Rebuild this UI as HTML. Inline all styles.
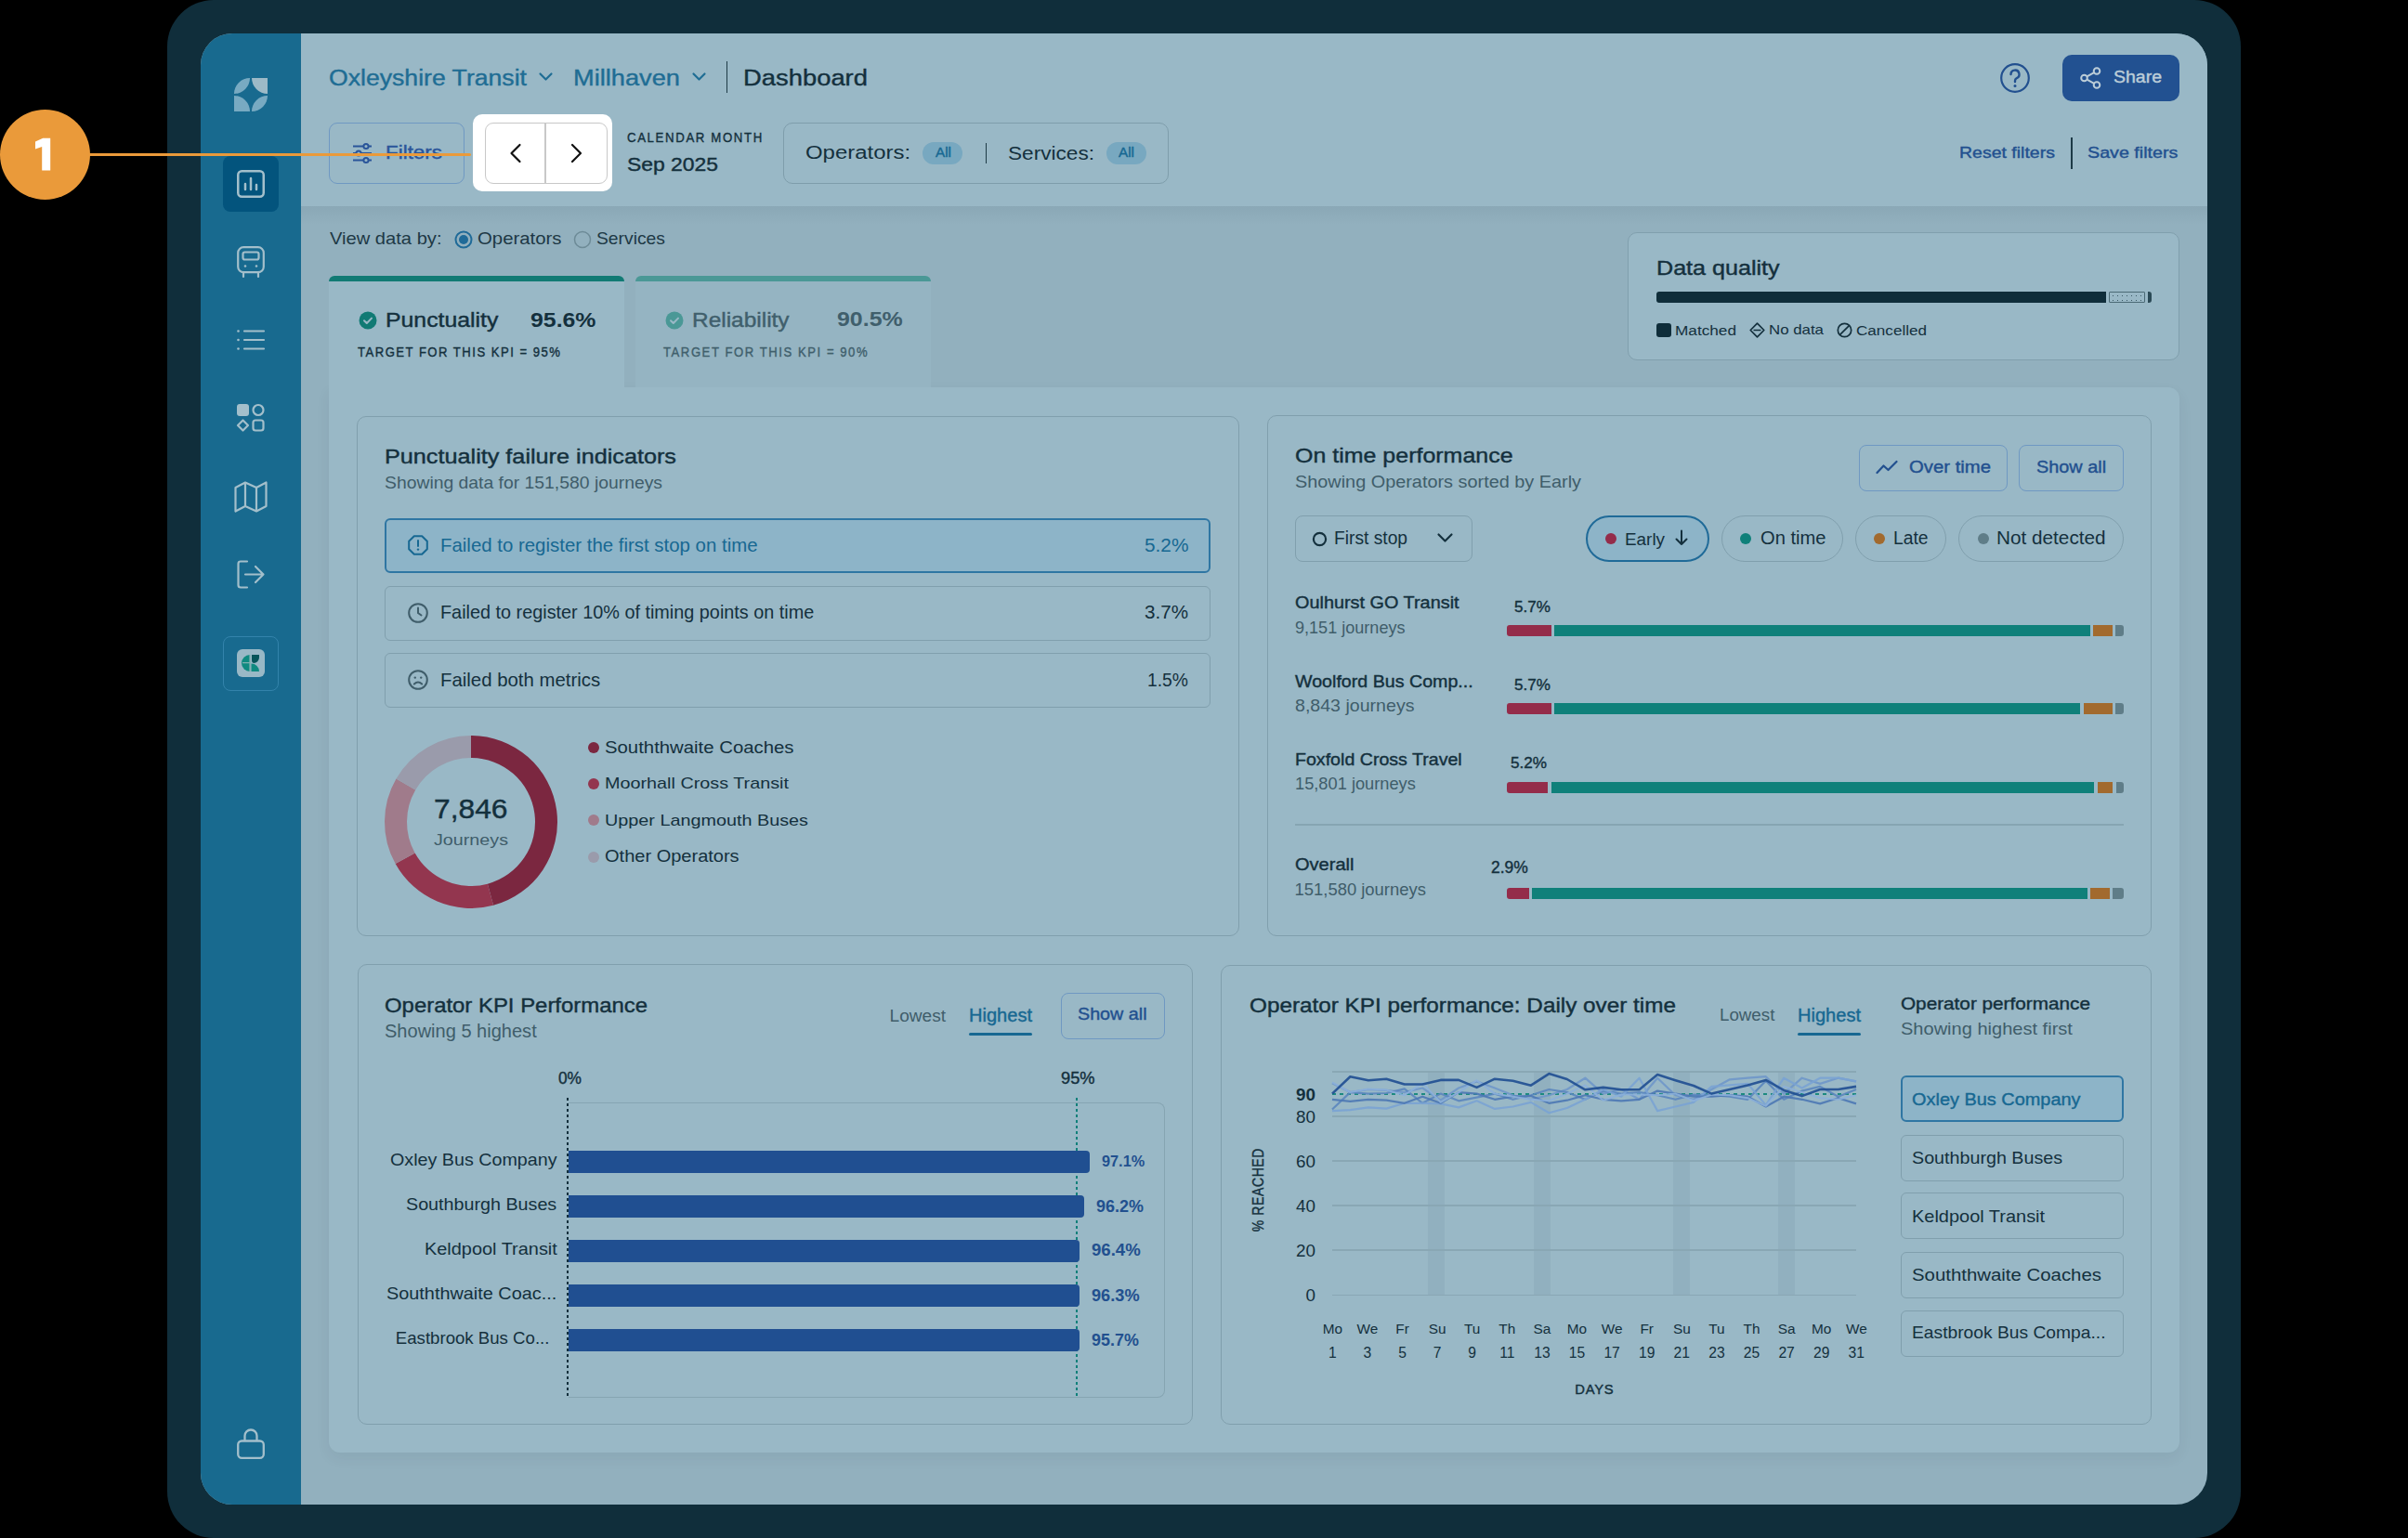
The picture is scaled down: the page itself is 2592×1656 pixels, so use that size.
<!DOCTYPE html><html><head><meta charset="utf-8"><style>
html,body{margin:0;padding:0;background:#000;}
body{width:2592px;height:1656px;position:relative;overflow:hidden;font-family:"Liberation Sans",sans-serif;}
.t{position:absolute;white-space:nowrap;line-height:1;}
</style></head><body>
<div style="position:absolute;left:180px;top:0px;width:2232px;height:1656px;background:#102e3b;border-radius:50px;"></div>
<div style="position:absolute;left:216px;top:36px;width:2160px;height:1584px;border-radius:34px;overflow:hidden;background:#92b0be">
<div style="position:absolute;left:-216px;top:-36px;width:2592px;height:1656px">
<div style="position:absolute;left:216px;top:0px;width:108px;height:1656px;background:#186a8f;border-radius:0px;"></div>
<div style="position:absolute;left:324px;top:0px;width:2100px;height:222px;background:#99b8c6;border-radius:0px;"></div>
<div style="position:absolute;left:324px;top:222px;width:2100px;height:20px;background:linear-gradient(rgba(0,30,45,0.055),rgba(0,30,45,0));border-radius:0px;"></div>
<svg style="position:absolute;left:252px;top:84px;overflow:visible;" width="36" height="36" viewBox="0 0 36 36"><path d="M0,17 A17,17 0 0 1 17,0 A17,17 0 0 1 0,17 Z" fill="#78aac2"/><path d="M19,0 L36,0 L36,17 A17,17 0 0 1 19,0 Z" fill="#9dbac7"/><path d="M0,19 A17,17 0 0 1 17,36 L0,36 Z" fill="#78aac2"/><path d="M19,36 A17,17 0 0 1 36,19 A17,17 0 0 1 19,36 Z" fill="#78aac2"/></svg>
<div style="position:absolute;left:240px;top:168px;width:60px;height:60px;background:#03547d;border-radius:8px;"></div>
<svg style="position:absolute;left:255px;top:183px;overflow:visible;" width="30" height="30" viewBox="0 0 30 30"><rect x="1.25" y="1.25" width="27.5" height="27.5" rx="4" fill="none" stroke="#a3bfcb" stroke-width="2.5"/><path d="M9,21 V15 M15,21 V9 M21,21 V16" stroke="#a3bfcb" stroke-width="2.5" stroke-linecap="round"/></svg>
<svg style="position:absolute;left:255px;top:265px;overflow:visible;" width="30" height="34" viewBox="0 0 30 34"><rect x="1.2" y="1.2" width="27.6" height="27" rx="6" fill="none" stroke="#a3bfcb" stroke-width="2.2"/><rect x="6.5" y="6.5" width="17" height="8" rx="2" fill="none" stroke="#a3bfcb" stroke-width="2.2"/><circle cx="9" cy="21.5" r="1.3" fill="#a3bfcb"/><circle cx="21" cy="21.5" r="1.3" fill="#a3bfcb"/><path d="M7,28 V33 M23,28 V33" stroke="#a3bfcb" stroke-width="2.2" stroke-linecap="round"/></svg>
<svg style="position:absolute;left:255px;top:355px;overflow:visible;" width="30" height="22" viewBox="0 0 30 22"><circle cx="1.5" cy="1.5" r="1.3" fill="#a3bfcb"/><circle cx="1.5" cy="11" r="1.3" fill="#a3bfcb"/><circle cx="1.5" cy="20.5" r="1.3" fill="#a3bfcb"/><path d="M8,1.5 H29 M8,11 H29 M8,20.5 H29" stroke="#a3bfcb" stroke-width="2.2" stroke-linecap="round"/></svg>
<svg style="position:absolute;left:255px;top:435px;overflow:visible;" width="30" height="30" viewBox="0 0 30 30"><rect x="0" y="0" width="13" height="13" rx="3" fill="#a3bfcb"/><circle cx="23" cy="6.5" r="5.5" fill="none" stroke="#a3bfcb" stroke-width="2.2"/><path d="M6.5,17.5 L12,23 L6.5,28.5 L1,23 Z" fill="none" stroke="#a3bfcb" stroke-width="2.2" stroke-linejoin="round"/><rect x="17.5" y="17.5" width="11" height="11" rx="2.5" fill="none" stroke="#a3bfcb" stroke-width="2.2"/></svg>
<svg style="position:absolute;left:252px;top:518px;overflow:visible;" width="36" height="34" viewBox="0 0 36 34"><path d="M1.5,7 L12,1.5 L24,7 L34.5,1.5 V27 L24,32.5 L12,27 L1.5,32.5 Z M12,1.5 V27 M24,7 V32.5" fill="none" stroke="#a3bfcb" stroke-width="2.2" stroke-linejoin="round"/></svg>
<svg style="position:absolute;left:255px;top:603px;overflow:visible;" width="30" height="31" viewBox="0 0 30 31"><path d="M11,1.5 H4 Q1.5,1.5 1.5,4 V27 Q1.5,29.5 4,29.5 H11" fill="none" stroke="#a3bfcb" stroke-width="2.2" stroke-linecap="round"/><path d="M9,15.5 H28.5 M20,7 L28.5,15.5 L20,24" fill="none" stroke="#a3bfcb" stroke-width="2.2" stroke-linecap="round" stroke-linejoin="round"/></svg>
<div style="position:absolute;left:240px;top:685px;width:60px;height:59px;background:none;border-radius:8px;border:1.5px solid #3383ab;box-sizing:border-box;"></div>
<div style="position:absolute;left:255px;top:699px;width:30px;height:30px;background:#99b8c6;border-radius:6px;"></div>
<svg style="position:absolute;left:261px;top:705px;overflow:visible;" width="18" height="18" viewBox="0 0 18 18"><path d="M8,0 A8,8 0 0 0 8,18 Z" fill="#0f8a80"/><path d="M9.5,9.5 L9.5,18 L18,18 A8.5,8.5 0 0 0 9.5,9.5 Z" fill="#0f8a80"/><path d="M10,0 H18 V3 A6,6 0 0 1 12,9 A3,3 0 0 1 10,6 Z" fill="#07555a"/><path d="M0,8.7 H8 M8,0 V18" stroke="#7fb0b0" stroke-width="1.3"/></svg>
<svg style="position:absolute;left:255px;top:1537px;overflow:visible;" width="30" height="34" viewBox="0 0 30 34"><path d="M8.5,15 V9 A6.5,6.5 0 0 1 21.5,9 V15" fill="none" stroke="#a3bfcb" stroke-width="2.3"/><rect x="1.2" y="14.5" width="27.6" height="18.3" rx="4" fill="none" stroke="#a3bfcb" stroke-width="2.3"/></svg>
<div class="t" id="t1" style="left:354.0px;top:72.0px;font-size:24.69px;color:#1f6d94;letter-spacing:0.000px;-webkit-text-stroke:0.4px currentColor;transform:scaleX(1.078);transform-origin:0 50%;">Oxleyshire Transit</div>
<svg style="position:absolute;left:580px;top:78px;overflow:visible;" width="15" height="10" viewBox="0 0 15 10"><path d="M1.5,1.5 L7.5,7.5 L13.5,1.5" fill="none" stroke="#1f6d94" stroke-width="2.2" stroke-linecap="round" stroke-linejoin="round"/></svg>
<div class="t" id="t2" style="left:617.0px;top:72.0px;font-size:24.81px;color:#1f6d94;letter-spacing:0.000px;-webkit-text-stroke:0.4px currentColor;transform:scaleX(1.098);transform-origin:0 50%;">Millhaven</div>
<svg style="position:absolute;left:745px;top:78px;overflow:visible;" width="15" height="10" viewBox="0 0 15 10"><path d="M1.5,1.5 L7.5,7.5 L13.5,1.5" fill="none" stroke="#1f6d94" stroke-width="2.2" stroke-linecap="round" stroke-linejoin="round"/></svg>
<div style="position:absolute;left:781.5px;top:66px;width:1.7px;height:34px;background:#1d3a46;border-radius:0px;"></div>
<div class="t" id="t3" style="left:800.0px;top:72.0px;font-size:24.84px;color:#14303d;letter-spacing:0.000px;-webkit-text-stroke:0.4px currentColor;transform:scaleX(1.103);transform-origin:0 50%;">Dashboard</div>
<div style="position:absolute;left:354px;top:132px;width:146px;height:66px;background:none;border-radius:9px;border:1.6px solid #6f98c2;box-sizing:border-box;"></div>
<svg style="position:absolute;left:379px;top:154px;overflow:visible;" width="22" height="22" viewBox="0 0 22 22"><path d="M1,3.5 H21 M1,11 H21 M1,18.5 H21" stroke="#2a559a" stroke-width="2"/><circle cx="15" cy="3.5" r="2.6" fill="#99b8c6" stroke="#2a559a" stroke-width="2"/><circle cx="7" cy="11" r="2.6" fill="#99b8c6" stroke="#2a559a" stroke-width="2"/><circle cx="15" cy="18.5" r="2.6" fill="#99b8c6" stroke="#2a559a" stroke-width="2"/></svg>
<div class="t" id="t4" style="left:415.0px;top:154.0px;font-size:20.79px;color:#2a559a;letter-spacing:0.000px;-webkit-text-stroke:0.4px currentColor;transform:scaleX(1.078);transform-origin:0 50%;">Filters</div>
<div class="t" id="t5" style="left:675.4px;top:140.1px;font-size:15.36px;color:#14303d;letter-spacing:1.901px;-webkit-text-stroke:0.4px currentColor;transform:scaleX(0.860);transform-origin:0 50%;">CALENDAR MONTH</div>
<div class="t" id="t6" style="left:675.0px;top:166.5px;font-size:20.36px;color:#14303d;letter-spacing:0.000px;-webkit-text-stroke:0.4px currentColor;transform:scaleX(1.124);transform-origin:0 50%;">Sep 2025</div>
<div style="position:absolute;left:843px;top:132px;width:415px;height:66px;background:none;border-radius:10px;border:1.5px solid #7e9dab;box-sizing:border-box;"></div>
<div class="t" id="t7" style="left:867.0px;top:154.4px;font-size:20.75px;color:#14303d;letter-spacing:0.000px;transform:scaleX(1.153);transform-origin:0 50%;">Operators:</div>
<div style="position:absolute;left:993px;top:153px;width:43px;height:24px;background:#78a8c0;border-radius:12px;"></div>
<div class="t" id="t8" style="left:1006.5px;top:157.3px;font-size:14.69px;color:#176892;letter-spacing:0.000px;-webkit-text-stroke:0.4px currentColor;transform:scaleX(1.042);transform-origin:0 50%;">All</div>
<div style="position:absolute;left:1060.5px;top:154px;width:1.7px;height:22px;background:#1d3a46;border-radius:0px;"></div>
<div class="t" id="t9" style="left:1085.0px;top:154.5px;font-size:20.52px;color:#14303d;letter-spacing:0.000px;transform:scaleX(1.103);transform-origin:0 50%;">Services:</div>
<div style="position:absolute;left:1191px;top:153px;width:43px;height:24px;background:#78a8c0;border-radius:12px;"></div>
<div class="t" id="t10" style="left:1204.3px;top:157.3px;font-size:14.69px;color:#176892;letter-spacing:0.000px;-webkit-text-stroke:0.4px currentColor;transform:scaleX(1.042);transform-origin:0 50%;">All</div>
<svg style="position:absolute;left:2153px;top:68px;overflow:visible;" width="32" height="32" viewBox="0 0 32 32"><circle cx="16" cy="16" r="14.8" fill="none" stroke="#22508f" stroke-width="2.2"/><path d="M11.5,12 A4.5,4.5 0 1 1 17.5,16.3 Q16,17 16,19 V20" fill="none" stroke="#22508f" stroke-width="2.4" stroke-linecap="round"/><circle cx="16" cy="24.6" r="1.5" fill="#22508f"/></svg>
<div style="position:absolute;left:2220px;top:59px;width:126px;height:50px;background:#225191;border-radius:10px;"></div>
<svg style="position:absolute;left:2239px;top:72px;overflow:visible;" width="23" height="24" viewBox="0 0 23 24"><g fill="none" stroke="#bccdd8" stroke-width="2"><circle cx="18" cy="4.5" r="3.3"/><circle cx="4.5" cy="12" r="3.3"/><circle cx="18" cy="19.5" r="3.3"/><path d="M7.4,10.4 L15.1,6.1 M7.4,13.6 L15.1,17.9"/></g></svg>
<div class="t" id="t11" style="left:2275.0px;top:74.8px;font-size:17.65px;color:#bccdd8;letter-spacing:0.000px;-webkit-text-stroke:0.4px currentColor;transform:scaleX(1.105);transform-origin:0 50%;">Share</div>
<div class="t" id="t12" style="left:2108.6px;top:155.8px;font-size:17.13px;color:#22508f;letter-spacing:0.000px;-webkit-text-stroke:0.4px currentColor;transform:scaleX(1.139);transform-origin:0 50%;">Reset filters</div>
<div style="position:absolute;left:2229.2px;top:148px;width:1.7px;height:34px;background:#1d3a46;border-radius:0px;"></div>
<div class="t" id="t13" style="left:2247.0px;top:155.8px;font-size:17.16px;color:#22508f;letter-spacing:0.000px;-webkit-text-stroke:0.4px currentColor;transform:scaleX(1.148);transform-origin:0 50%;">Save filters</div>
<div class="t" id="t14" style="left:354.5px;top:248.3px;font-size:18.81px;color:#1d3845;letter-spacing:0.000px;transform:scaleX(1.071);transform-origin:0 50%;">View data by:</div>
<svg style="position:absolute;left:489px;top:248px;overflow:visible;" width="20" height="20" viewBox="0 0 20 20"><circle cx="10" cy="10" r="8.5" fill="none" stroke="#1f6a98" stroke-width="2"/><circle cx="10" cy="10" r="5" fill="#1f6a98"/></svg>
<div class="t" id="t15" style="left:514.0px;top:248.2px;font-size:18.85px;color:#1d3845;letter-spacing:0.000px;transform:scaleX(1.080);transform-origin:0 50%;">Operators</div>
<svg style="position:absolute;left:617px;top:248px;overflow:visible;" width="20" height="20" viewBox="0 0 20 20"><circle cx="10" cy="10" r="8.5" fill="none" stroke="#6d8b97" stroke-width="1.5"/></svg>
<div class="t" id="t16" style="left:642.0px;top:248.3px;font-size:18.65px;color:#1d3845;letter-spacing:0.000px;transform:scaleX(1.035);transform-origin:0 50%;">Services</div>
<div style="position:absolute;left:354px;top:417px;width:1992px;height:1147px;background:#99b8c6;border-radius:0 12px 12px 12px;box-shadow:0 6px 16px rgba(0,30,45,0.06);"></div>
<div style="position:absolute;left:684px;top:297px;width:318px;height:120px;background:#95b4c2;border-radius:8px 8px 0 0;"></div>
<div style="position:absolute;left:684px;top:297px;width:318px;height:6px;background:#4a9896;border-radius:6px 6px 0 0;"></div>
<div style="position:absolute;left:354px;top:297px;width:318px;height:125px;background:#99b8c6;border-radius:8px 8px 0 0;"></div>
<div style="position:absolute;left:354px;top:297px;width:318px;height:6px;background:#117a74;border-radius:6px 6px 0 0;"></div>
<svg style="position:absolute;left:386px;top:335px;overflow:visible;" width="20" height="20" viewBox="0 0 20 20"><circle cx="10" cy="10" r="9.5" fill="#117a74"/><path d="M6,10.2 L8.8,13 L14,7.6" fill="none" stroke="#99b8c6" stroke-width="2" stroke-linecap="round" stroke-linejoin="round"/></svg>
<div class="t" id="t17" style="left:414.7px;top:334.3px;font-size:21.22px;color:#14303d;letter-spacing:0.000px;-webkit-text-stroke:0.4px currentColor;transform:scaleX(1.169);transform-origin:0 50%;">Punctuality</div>
<div class="t" id="t18" style="left:571.0px;top:334.3px;font-size:21.23px;color:#14303d;letter-spacing:0.000px;font-weight:700;transform:scaleX(1.171);transform-origin:0 50%;">95.6%</div>
<div class="t" id="t19" style="left:385.0px;top:371.2px;font-size:15.22px;color:#14303d;letter-spacing:1.725px;-webkit-text-stroke:0.4px currentColor;transform:scaleX(0.860);transform-origin:0 50%;">TARGET FOR THIS KPI = 95%</div>
<svg style="position:absolute;left:715.5px;top:335px;overflow:visible;" width="20" height="20" viewBox="0 0 20 20"><circle cx="10" cy="10" r="9.5" fill="#4a9896"/><path d="M6,10.2 L8.8,13 L14,7.6" fill="none" stroke="#99b8c6" stroke-width="2" stroke-linecap="round" stroke-linejoin="round"/></svg>
<div class="t" id="t20" style="left:745.0px;top:334.3px;font-size:21.16px;color:#405f6c;letter-spacing:0.000px;-webkit-text-stroke:0.4px currentColor;transform:scaleX(1.155);transform-origin:0 50%;">Reliability</div>
<div class="t" id="t21" style="left:901.0px;top:334.3px;font-size:21.24px;color:#405f6c;letter-spacing:0.000px;font-weight:700;transform:scaleX(1.174);transform-origin:0 50%;">90.5%</div>
<div class="t" id="t22" style="left:714.0px;top:371.2px;font-size:15.22px;color:#405f6c;letter-spacing:1.812px;-webkit-text-stroke:0.4px currentColor;transform:scaleX(0.860);transform-origin:0 50%;">TARGET FOR THIS KPI = 90%</div>
<div style="position:absolute;left:1752px;top:250px;width:594px;height:138px;background:#99b8c6;border-radius:10px;border:1.6px solid #809fad;box-sizing:border-box;"></div>
<div class="t" id="t23" style="left:1782.5px;top:278.2px;font-size:21.80px;color:#14303d;letter-spacing:0.000px;-webkit-text-stroke:0.4px currentColor;transform:scaleX(1.152);transform-origin:0 50%;">Data quality</div>
<div style="position:absolute;left:1782.5px;top:314px;width:484px;height:12px;background:#0f2d3a;border-radius:3px 0 0 3px;"></div>
<div style="position:absolute;left:2270px;top:314px;width:39px;height:12px;background:radial-gradient(circle,#3b5a66 0.7px,transparent 1px) 1px 1px/5px 5px;border-radius:1px;border:1px solid #4b6a76;box-sizing:border-box;"></div>
<div style="position:absolute;left:2311.5px;top:314px;width:4.5px;height:12px;background:#2b4a56;border-radius:0 3px 3px 0;"></div>
<div style="position:absolute;left:1783px;top:348px;width:16px;height:15px;background:#0f2d3a;border-radius:3px;"></div>
<div class="t" id="t24" style="left:1803.0px;top:347.8px;font-size:15.04px;color:#14303d;letter-spacing:0.000px;transform:scaleX(1.145);transform-origin:0 50%;">Matched</div>
<svg style="position:absolute;left:1883px;top:347px;overflow:visible;" width="17" height="17" viewBox="0 0 17 17"><path d="M8.5,1.2 L15.8,8.5 L8.5,15.8 L1.2,8.5 Z M4.5,8.5 H12.5" fill="none" stroke="#14303d" stroke-width="1.7" stroke-linejoin="round"/></svg>
<div class="t" id="t25" style="left:1903.5px;top:347.8px;font-size:14.97px;color:#14303d;letter-spacing:0.000px;transform:scaleX(1.125);transform-origin:0 50%;">No data</div>
<svg style="position:absolute;left:1977px;top:347px;overflow:visible;" width="17" height="17" viewBox="0 0 17 17"><circle cx="8.5" cy="8.5" r="7.2" fill="none" stroke="#14303d" stroke-width="1.7"/><path d="M3.6,13.4 L13.4,3.6" stroke="#14303d" stroke-width="1.7"/></svg>
<div class="t" id="t26" style="left:1998.0px;top:347.8px;font-size:15.02px;color:#14303d;letter-spacing:0.000px;transform:scaleX(1.138);transform-origin:0 50%;">Cancelled</div>
<div style="position:absolute;left:384px;top:447.5px;width:949.6px;height:560.8px;background:none;border-radius:10px;border:1.6px solid #809fad;box-sizing:border-box;"></div>
<div class="t" id="t27" style="left:414.0px;top:481.2px;font-size:21.82px;color:#14303d;letter-spacing:0.000px;-webkit-text-stroke:0.4px currentColor;transform:scaleX(1.156);transform-origin:0 50%;">Punctuality failure indicators</div>
<div class="t" id="t28" style="left:414.0px;top:510.8px;font-size:18.66px;color:#3f5d6a;letter-spacing:0.000px;transform:scaleX(1.037);transform-origin:0 50%;">Showing data for 151,580 journeys</div>
<div style="position:absolute;left:414px;top:558px;width:889px;height:59px;background:#8db4c8;border-radius:6px;border:2px solid #2f76a3;box-sizing:border-box;"></div>
<svg style="position:absolute;left:439px;top:576px;overflow:visible;" width="22" height="22" viewBox="0 0 22 22"><path d="M6.8,1.2 H15.2 L20.8,6.8 V15.2 L15.2,20.8 H6.8 L1.2,15.2 V6.8 Z" fill="none" stroke="#176892" stroke-width="2" stroke-linejoin="round"/><path d="M11,6 V12" stroke="#176892" stroke-width="2" stroke-linecap="round"/><circle cx="11" cy="15.6" r="1.2" fill="#176892"/></svg>
<div class="t" id="t29" style="left:474.4px;top:577.5px;font-size:19.79px;color:#176892;letter-spacing:0.000px;transform:scaleX(1.032);transform-origin:0 50%;">Failed to register the first stop on time</div>
<div class="t" id="t30" style="left:1231.5px;top:577.5px;font-size:19.88px;color:#176892;letter-spacing:0.000px;transform:scaleX(1.049);transform-origin:0 50%;">5.2%</div>
<div style="position:absolute;left:414px;top:630.5px;width:889px;height:59px;background:none;border-radius:6px;border:1.5px solid #809fad;box-sizing:border-box;"></div>
<svg style="position:absolute;left:439px;top:649px;overflow:visible;" width="22" height="22" viewBox="0 0 22 22"><circle cx="11" cy="11" r="9.8" fill="none" stroke="#3f5d6a" stroke-width="2"/><path d="M11,5.5 V11 L14.5,13.5" fill="none" stroke="#3f5d6a" stroke-width="2" stroke-linecap="round"/></svg>
<div class="t" id="t31" style="left:474.4px;top:650.1px;font-size:19.68px;color:#14303d;letter-spacing:0.000px;transform:scaleX(1.008);transform-origin:0 50%;">Failed to register 10% of timing points on time</div>
<div class="t" id="t32" style="left:1232.0px;top:650.0px;font-size:19.84px;color:#14303d;letter-spacing:0.000px;transform:scaleX(1.040);transform-origin:0 50%;">3.7%</div>
<div style="position:absolute;left:414px;top:703px;width:889px;height:59px;background:none;border-radius:6px;border:1.5px solid #809fad;box-sizing:border-box;"></div>
<svg style="position:absolute;left:439px;top:721px;overflow:visible;" width="22" height="22" viewBox="0 0 22 22"><circle cx="11" cy="11" r="9.8" fill="none" stroke="#3f5d6a" stroke-width="2"/><circle cx="7.8" cy="8.6" r="1.2" fill="#3f5d6a"/><circle cx="14.2" cy="8.6" r="1.2" fill="#3f5d6a"/><path d="M6.8,15.5 Q11,11.5 15.2,15.5" fill="none" stroke="#3f5d6a" stroke-width="2" stroke-linecap="round"/></svg>
<div class="t" id="t33" style="left:474.4px;top:722.5px;font-size:19.79px;color:#14303d;letter-spacing:0.000px;transform:scaleX(1.030);transform-origin:0 50%;">Failed both metrics</div>
<div class="t" id="t34" style="left:1235.0px;top:722.7px;font-size:19.48px;color:#14303d;letter-spacing:0.000px;transform:scaleX(0.992);transform-origin:0 50%;">1.5%</div>
<svg style="position:absolute;left:407px;top:785px;overflow:visible;" width="200" height="200" viewBox="0 0 200 200"><path d="M100.00,7.00 A93,93 0 0 1 124.07,189.83 L117.86,166.65 A69,69 0 0 0 100.00,31.00 Z" fill="#7b2740"/><path d="M124.07,189.83 A93,93 0 0 1 18.66,145.09 L39.65,133.45 A69,69 0 0 0 117.86,166.65 Z" fill="#93364f"/><path d="M18.66,145.09 A93,93 0 0 1 19.46,53.50 L40.24,65.50 A69,69 0 0 0 39.65,133.45 Z" fill="#a07b8b"/><path d="M19.46,53.50 A93,93 0 0 1 100.00,7.00 L100.00,31.00 A69,69 0 0 0 40.24,65.50 Z" fill="#9a9bab"/></svg>
<div class="t" id="t35" style="left:467.0px;top:856.5px;font-size:28.77px;color:#14303d;letter-spacing:0.000px;-webkit-text-stroke:0.4px currentColor;transform:scaleX(1.105);transform-origin:0 50%;">7,846</div>
<div class="t" id="t36" style="left:467.0px;top:897.4px;font-size:16.95px;color:#3f5d6a;letter-spacing:0.000px;transform:scaleX(1.164);transform-origin:0 50%;">Journeys</div>
<div style="position:absolute;left:633px;top:799.4px;width:12px;height:12px;background:#7b2740;border-radius:6px;"></div>
<div class="t" id="t37" style="left:651.0px;top:796.6px;font-size:17.48px;color:#14303d;letter-spacing:0.000px;transform:scaleX(1.164);transform-origin:0 50%;">Souththwaite Coaches</div>
<div style="position:absolute;left:633px;top:838px;width:12px;height:12px;background:#93364f;border-radius:6px;"></div>
<div class="t" id="t38" style="left:651.0px;top:835.2px;font-size:17.39px;color:#14303d;letter-spacing:0.000px;transform:scaleX(1.139);transform-origin:0 50%;">Moorhall Cross Transit</div>
<div style="position:absolute;left:633px;top:877.4px;width:12px;height:12px;background:#a07b8b;border-radius:6px;"></div>
<div class="t" id="t39" style="left:651.0px;top:874.6px;font-size:17.39px;color:#14303d;letter-spacing:0.000px;transform:scaleX(1.139);transform-origin:0 50%;">Upper Langmouth Buses</div>
<div style="position:absolute;left:633px;top:916.5px;width:12px;height:12px;background:#9a9bab;border-radius:6px;"></div>
<div class="t" id="t40" style="left:651.0px;top:913.7px;font-size:17.43px;color:#14303d;letter-spacing:0.000px;transform:scaleX(1.149);transform-origin:0 50%;">Other Operators</div>
<div style="position:absolute;left:1364px;top:447px;width:952px;height:561.3px;background:none;border-radius:10px;border:1.6px solid #809fad;box-sizing:border-box;"></div>
<div class="t" id="t41" style="left:1393.5px;top:479.9px;font-size:21.99px;color:#14303d;letter-spacing:0.000px;-webkit-text-stroke:0.4px currentColor;transform:scaleX(1.136);transform-origin:0 50%;">On time performance</div>
<div class="t" id="t42" style="left:1393.5px;top:508.8px;font-size:19.28px;color:#3f5d6a;letter-spacing:0.000px;transform:scaleX(1.031);transform-origin:0 50%;">Showing Operators sorted by Early</div>
<div style="position:absolute;left:2001px;top:479px;width:160px;height:50px;background:none;border-radius:8px;border:1.5px solid #6f98c2;box-sizing:border-box;"></div>
<svg style="position:absolute;left:2019px;top:495px;overflow:visible;" width="24" height="16" viewBox="0 0 24 16"><path d="M1.5,14 L8.5,6.5 L13.5,11 L22.5,2" fill="none" stroke="#22508f" stroke-width="2.2" stroke-linecap="round" stroke-linejoin="round"/></svg>
<div class="t" id="t43" style="left:2055.0px;top:494.1px;font-size:18.95px;color:#22508f;letter-spacing:0.000px;-webkit-text-stroke:0.4px currentColor;transform:scaleX(1.072);transform-origin:0 50%;">Over time</div>
<div style="position:absolute;left:2173px;top:479px;width:113px;height:50px;background:none;border-radius:8px;border:1.5px solid #6f98c2;box-sizing:border-box;"></div>
<div class="t" id="t44" style="left:2192.0px;top:494.2px;font-size:18.86px;color:#22508f;letter-spacing:0.000px;-webkit-text-stroke:0.4px currentColor;transform:scaleX(1.053);transform-origin:0 50%;">Show all</div>
<div style="position:absolute;left:1394px;top:555px;width:191px;height:50px;background:none;border-radius:8px;border:1.5px solid #809fad;box-sizing:border-box;"></div>
<svg style="position:absolute;left:1412px;top:572px;overflow:visible;" width="17" height="17" viewBox="0 0 17 17"><circle cx="8.5" cy="8.5" r="6.6" fill="none" stroke="#14303d" stroke-width="2.2"/></svg>
<div class="t" id="t45" style="left:1436.0px;top:570.4px;font-size:19.37px;color:#14303d;letter-spacing:0.000px;transform:scaleX(0.993);transform-origin:0 50%;">First stop</div>
<svg style="position:absolute;left:1547px;top:574px;overflow:visible;" width="17" height="11" viewBox="0 0 17 11"><path d="M1.5,1.5 L8.5,8.5 L15.5,1.5" fill="none" stroke="#14303d" stroke-width="2.2" stroke-linecap="round" stroke-linejoin="round"/></svg>
<div style="position:absolute;left:1707px;top:555px;width:133px;height:50px;background:#8db4c8;border-radius:25px;border:2px solid #1f6a98;box-sizing:border-box;"></div>
<div style="position:absolute;left:1728px;top:574px;width:12px;height:12px;background:#942c4a;border-radius:6px;"></div>
<div class="t" id="t46" style="left:1749.0px;top:570.5px;font-size:19.19px;color:#14303d;letter-spacing:0.000px;transform:scaleX(0.984);transform-origin:0 50%;">Early</div>
<svg style="position:absolute;left:1802px;top:570px;overflow:visible;" width="16" height="18" viewBox="0 0 16 18"><path d="M8,1.5 V16 M2.5,10.5 L8,16 L13.5,10.5" fill="none" stroke="#14303d" stroke-width="2" stroke-linecap="round" stroke-linejoin="round"/></svg>
<div style="position:absolute;left:1853px;top:555px;width:131px;height:50px;background:none;border-radius:25px;border:1.5px solid #809fad;box-sizing:border-box;"></div>
<div style="position:absolute;left:1873px;top:574px;width:12px;height:12px;background:#0f807a;border-radius:6px;"></div>
<div class="t" id="t47" style="left:1894.7px;top:570.2px;font-size:19.64px;color:#14303d;letter-spacing:0.000px;transform:scaleX(1.026);transform-origin:0 50%;">On time</div>
<div style="position:absolute;left:1997px;top:555px;width:98px;height:50px;background:none;border-radius:25px;border:1.5px solid #809fad;box-sizing:border-box;"></div>
<div style="position:absolute;left:2017px;top:574px;width:12px;height:12px;background:#a26a2e;border-radius:6px;"></div>
<div class="t" id="t48" style="left:2038.4px;top:570.4px;font-size:19.40px;color:#14303d;letter-spacing:0.000px;transform:scaleX(0.994);transform-origin:0 50%;">Late</div>
<div style="position:absolute;left:2108px;top:555px;width:178px;height:50px;background:none;border-radius:25px;border:1.5px solid #809fad;box-sizing:border-box;"></div>
<div style="position:absolute;left:2129px;top:574px;width:12px;height:12px;background:#5f7d88;border-radius:6px;"></div>
<div class="t" id="t49" style="left:2149.0px;top:570.2px;font-size:19.75px;color:#14303d;letter-spacing:0.000px;transform:scaleX(1.050);transform-origin:0 50%;">Not detected</div>
<div class="t" id="t50" style="left:1393.5px;top:639.6px;font-size:18.76px;color:#14303d;letter-spacing:0.000px;-webkit-text-stroke:0.4px currentColor;transform:scaleX(1.059);transform-origin:0 50%;">Oulhurst GO Transit</div>
<div class="t" id="t51" style="left:1393.5px;top:666.8px;font-size:18.28px;color:#3f5d6a;letter-spacing:0.000px;transform:scaleX(0.989);transform-origin:0 50%;">9,151 journeys</div>
<div class="t" id="t52" style="left:1630.0px;top:644.9px;font-size:17.26px;color:#14303d;letter-spacing:0.000px;-webkit-text-stroke:0.4px currentColor;transform:scaleX(0.988);transform-origin:0 50%;">5.7%</div>
<div style="position:absolute;left:1622px;top:673.4px;width:47.59999999999991px;height:12px;background:#942c4a;border-radius:3px 0 0 3px;"></div>
<div style="position:absolute;left:1672.5px;top:673.4px;width:577.3000000000002px;height:12px;background:#0f807a;border-radius:0px;"></div>
<div style="position:absolute;left:2253px;top:673.4px;width:21px;height:12px;background:#a26a2e;border-radius:0px;"></div>
<div style="position:absolute;left:2277px;top:673.4px;width:8.5px;height:12px;background:#5f7d88;border-radius:0 3px 3px 0;"></div>
<div class="t" id="t53" style="left:1393.5px;top:724.8px;font-size:18.72px;color:#14303d;letter-spacing:0.000px;-webkit-text-stroke:0.4px currentColor;transform:scaleX(1.050);transform-origin:0 50%;">Woolford Bus Comp...</div>
<div class="t" id="t54" style="left:1393.5px;top:750.8px;font-size:18.71px;color:#3f5d6a;letter-spacing:0.000px;transform:scaleX(1.047);transform-origin:0 50%;">8,843 journeys</div>
<div class="t" id="t55" style="left:1630.0px;top:729.1px;font-size:17.26px;color:#14303d;letter-spacing:0.000px;-webkit-text-stroke:0.4px currentColor;transform:scaleX(0.988);transform-origin:0 50%;">5.7%</div>
<div style="position:absolute;left:1622px;top:757.3px;width:47.59999999999991px;height:12px;background:#942c4a;border-radius:3px 0 0 3px;"></div>
<div style="position:absolute;left:1672.5px;top:757.3px;width:566.9000000000001px;height:12px;background:#0f807a;border-radius:0px;"></div>
<div style="position:absolute;left:2242.7px;top:757.3px;width:31.300000000000182px;height:12px;background:#a26a2e;border-radius:0px;"></div>
<div style="position:absolute;left:2277px;top:757.3px;width:8.5px;height:12px;background:#5f7d88;border-radius:0 3px 3px 0;"></div>
<div class="t" id="t56" style="left:1393.5px;top:808.8px;font-size:18.71px;color:#14303d;letter-spacing:0.000px;-webkit-text-stroke:0.4px currentColor;transform:scaleX(1.048);transform-origin:0 50%;">Foxfold Cross Travel</div>
<div class="t" id="t57" style="left:1393.5px;top:835.0px;font-size:18.38px;color:#3f5d6a;letter-spacing:0.000px;transform:scaleX(0.994);transform-origin:0 50%;">15,801 journeys</div>
<div class="t" id="t58" style="left:1626.4px;top:813.1px;font-size:17.32px;color:#14303d;letter-spacing:0.000px;-webkit-text-stroke:0.4px currentColor;transform:scaleX(0.991);transform-origin:0 50%;">5.2%</div>
<div style="position:absolute;left:1622px;top:841.6px;width:44.299999999999955px;height:12px;background:#942c4a;border-radius:3px 0 0 3px;"></div>
<div style="position:absolute;left:1669.6px;top:841.6px;width:584.4000000000001px;height:12px;background:#0f807a;border-radius:0px;"></div>
<div style="position:absolute;left:2257.7px;top:841.6px;width:16.300000000000182px;height:12px;background:#a26a2e;border-radius:0px;"></div>
<div style="position:absolute;left:2277.5px;top:841.6px;width:8.0px;height:12px;background:#5f7d88;border-radius:0 3px 3px 0;"></div>
<div class="t" id="t59" style="left:1393.5px;top:921.8px;font-size:18.79px;color:#14303d;letter-spacing:0.000px;-webkit-text-stroke:0.4px currentColor;transform:scaleX(1.067);transform-origin:0 50%;">Overall</div>
<div class="t" id="t60" style="left:1393.5px;top:948.9px;font-size:18.45px;color:#3f5d6a;letter-spacing:0.000px;">151,580 journeys</div>
<div class="t" id="t61" style="left:1605.0px;top:926.0px;font-size:17.45px;color:#14303d;letter-spacing:0.000px;-webkit-text-stroke:0.4px currentColor;">2.9%</div>
<div style="position:absolute;left:1622px;top:955.8px;width:23.5px;height:12px;background:#942c4a;border-radius:3px 0 0 3px;"></div>
<div style="position:absolute;left:1648.9px;top:955.8px;width:598.0px;height:12px;background:#0f807a;border-radius:0px;"></div>
<div style="position:absolute;left:2250px;top:955.8px;width:21px;height:12px;background:#a26a2e;border-radius:0px;"></div>
<div style="position:absolute;left:2274px;top:955.8px;width:11.5px;height:12px;background:#5f7d88;border-radius:0 3px 3px 0;"></div>
<div style="position:absolute;left:1393.5px;top:887px;width:892px;height:1.5px;background:#86a5b2;border-radius:0px;"></div>
<div style="position:absolute;left:384.5px;top:1038px;width:899px;height:496px;background:none;border-radius:10px;border:1.6px solid #809fad;box-sizing:border-box;"></div>
<div class="t" id="t62" style="left:414.0px;top:1072.3px;font-size:21.90px;color:#14303d;letter-spacing:0.000px;-webkit-text-stroke:0.4px currentColor;transform:scaleX(1.092);transform-origin:0 50%;">Operator KPI Performance</div>
<div class="t" id="t63" style="left:414.0px;top:1101.3px;font-size:19.31px;color:#3f5d6a;letter-spacing:0.000px;transform:scaleX(1.038);transform-origin:0 50%;">Showing 5 highest</div>
<div class="t" id="t64" style="left:957.6px;top:1083.9px;font-size:19.10px;color:#3f5d6a;letter-spacing:0.000px;">Lowest</div>
<div class="t" id="t65" style="left:1042.8px;top:1083.7px;font-size:19.32px;color:#176892;letter-spacing:0.000px;-webkit-text-stroke:0.4px currentColor;transform:scaleX(1.039);transform-origin:0 50%;">Highest</div>
<div style="position:absolute;left:1042.8px;top:1112px;width:68px;height:3px;background:#176892;border-radius:2px;"></div>
<div style="position:absolute;left:1142px;top:1068.5px;width:112px;height:50px;background:none;border-radius:8px;border:1.5px solid #6f98c2;box-sizing:border-box;"></div>
<div class="t" id="t66" style="left:1160.0px;top:1083.3px;font-size:18.84px;color:#22508f;letter-spacing:0.000px;-webkit-text-stroke:0.4px currentColor;transform:scaleX(1.047);transform-origin:0 50%;">Show all</div>
<div class="t" id="t67" style="left:601.0px;top:1153.1px;font-size:17.57px;color:#14303d;letter-spacing:0.000px;-webkit-text-stroke:0.4px currentColor;transform:scaleX(0.984);transform-origin:0 50%;">0%</div>
<div class="t" id="t68" style="left:1142.0px;top:1152.9px;font-size:17.93px;color:#14303d;letter-spacing:0.000px;-webkit-text-stroke:0.4px currentColor;transform:scaleX(1.017);transform-origin:0 50%;">95%</div>
<div style="position:absolute;left:612px;top:1187px;width:642px;height:318px;background:none;border-radius:8px;border:1.5px solid #86a5b2;box-sizing:border-box;border-left:none;border-radius:0 8px 8px 0;"></div>
<div style="position:absolute;left:610px;top:1182px;width:2px;height:323px;background:repeating-linear-gradient(180deg,#14303d 0 3px,transparent 3px 6px);border-radius:0px;"></div>
<div style="position:absolute;left:1158px;top:1182px;width:2px;height:323px;background:repeating-linear-gradient(180deg,#0f807a 0 3px,transparent 3px 6px);border-radius:0px;"></div>
<div class="t" id="t69" style="left:420.0px;top:1239.5px;font-size:18.83px;color:#14303d;letter-spacing:0.000px;transform:scaleX(1.046);transform-origin:0 50%;">Oxley Bus Company</div>
<div style="position:absolute;left:612px;top:1239px;width:560.5999999999999px;height:23.5px;background:#204f91;border-radius:0 4px 4px 0;"></div>
<div class="t" id="t70" style="left:1185.6px;top:1242.8px;font-size:16.94px;color:#22508f;letter-spacing:0.000px;font-weight:700;transform:scaleX(0.962);transform-origin:0 50%;">97.1%</div>
<div class="t" id="t71" style="left:437.2px;top:1287.5px;font-size:18.84px;color:#14303d;letter-spacing:0.000px;transform:scaleX(1.047);transform-origin:0 50%;">Southburgh Buses</div>
<div style="position:absolute;left:612px;top:1287px;width:554.7px;height:23.5px;background:#204f91;border-radius:0 4px 4px 0;"></div>
<div class="t" id="t72" style="left:1179.7px;top:1290.5px;font-size:17.67px;color:#22508f;letter-spacing:0.000px;font-weight:700;transform:scaleX(1.016);transform-origin:0 50%;">96.2%</div>
<div class="t" id="t73" style="left:456.6px;top:1335.5px;font-size:18.87px;color:#14303d;letter-spacing:0.000px;transform:scaleX(1.056);transform-origin:0 50%;">Keldpool Transit</div>
<div style="position:absolute;left:612px;top:1335px;width:550px;height:23.5px;background:#204f91;border-radius:0 4px 4px 0;"></div>
<div class="t" id="t74" style="left:1175.0px;top:1338.4px;font-size:17.80px;color:#22508f;letter-spacing:0.000px;font-weight:700;transform:scaleX(1.046);transform-origin:0 50%;">96.4%</div>
<div class="t" id="t75" style="left:416.3px;top:1383.5px;font-size:18.86px;color:#14303d;letter-spacing:0.000px;transform:scaleX(1.053);transform-origin:0 50%;">Souththwaite Coac...</div>
<div style="position:absolute;left:612px;top:1383px;width:550px;height:23.5px;background:#204f91;border-radius:0 4px 4px 0;"></div>
<div class="t" id="t76" style="left:1175.0px;top:1386.5px;font-size:17.72px;color:#22508f;letter-spacing:0.000px;font-weight:700;transform:scaleX(1.027);transform-origin:0 50%;">96.3%</div>
<div class="t" id="t77" style="left:425.8px;top:1431.6px;font-size:18.64px;color:#14303d;letter-spacing:0.000px;">Eastbrook Bus Co...</div>
<div style="position:absolute;left:612px;top:1431px;width:550px;height:23.5px;background:#204f91;border-radius:0 4px 4px 0;"></div>
<div class="t" id="t78" style="left:1175.0px;top:1434.5px;font-size:17.66px;color:#22508f;letter-spacing:0.000px;font-weight:700;transform:scaleX(1.015);transform-origin:0 50%;">95.7%</div>
<div style="position:absolute;left:1314px;top:1038.5px;width:1002px;height:495px;background:none;border-radius:10px;border:1.6px solid #809fad;box-sizing:border-box;"></div>
<div class="t" id="t79" style="left:1344.5px;top:1072.8px;font-size:21.45px;color:#14303d;letter-spacing:0.000px;-webkit-text-stroke:0.4px currentColor;transform:scaleX(1.133);transform-origin:0 50%;">Operator KPI performance: Daily over time</div>
<div class="t" id="t80" style="left:1850.7px;top:1083.9px;font-size:18.93px;color:#3f5d6a;letter-spacing:0.000px;transform:scaleX(0.990);transform-origin:0 50%;">Lowest</div>
<div class="t" id="t81" style="left:1935.4px;top:1083.7px;font-size:19.32px;color:#176892;letter-spacing:0.000px;-webkit-text-stroke:0.4px currentColor;transform:scaleX(1.039);transform-origin:0 50%;">Highest</div>
<div style="position:absolute;left:1935.4px;top:1111.5px;width:68px;height:3px;background:#176892;border-radius:2px;"></div>
<div class="t" id="t82" style="left:2046.3px;top:1071.5px;font-size:18.40px;color:#14303d;letter-spacing:0.000px;-webkit-text-stroke:0.4px currentColor;transform:scaleX(1.127);transform-origin:0 50%;">Operator performance</div>
<div class="t" id="t83" style="left:2046.3px;top:1098.7px;font-size:18.27px;color:#3f5d6a;letter-spacing:0.000px;transform:scaleX(1.097);transform-origin:0 50%;">Showing highest first</div>
<div style="position:absolute;left:2046px;top:1158.3px;width:240px;height:50px;background:#8db4c8;border-radius:6px;border:2px solid #2f76a3;box-sizing:border-box;"></div>
<div class="t" id="t84" style="left:2058.0px;top:1173.6px;font-size:19.08px;color:#176892;letter-spacing:0.000px;-webkit-text-stroke:0.4px currentColor;transform:scaleX(1.044);transform-origin:0 50%;">Oxley Bus Company</div>
<div style="position:absolute;left:2046px;top:1221.6px;width:240px;height:50px;background:none;border-radius:6px;border:1.5px solid #809fad;box-sizing:border-box;"></div>
<div class="t" id="t85" style="left:2058.0px;top:1236.9px;font-size:19.04px;color:#14303d;letter-spacing:0.000px;transform:scaleX(1.035);transform-origin:0 50%;">Southburgh Buses</div>
<div style="position:absolute;left:2046px;top:1284.4px;width:240px;height:50px;background:none;border-radius:6px;border:1.5px solid #809fad;box-sizing:border-box;"></div>
<div class="t" id="t86" style="left:2058.0px;top:1299.7px;font-size:19.09px;color:#14303d;letter-spacing:0.000px;transform:scaleX(1.046);transform-origin:0 50%;">Keldpool Transit</div>
<div style="position:absolute;left:2046px;top:1347.7px;width:240px;height:50px;background:none;border-radius:6px;border:1.5px solid #809fad;box-sizing:border-box;"></div>
<div class="t" id="t87" style="left:2058.0px;top:1362.9px;font-size:19.17px;color:#14303d;letter-spacing:0.000px;transform:scaleX(1.064);transform-origin:0 50%;">Souththwaite Coaches</div>
<div style="position:absolute;left:2046px;top:1410.6px;width:240px;height:50px;background:none;border-radius:6px;border:1.5px solid #809fad;box-sizing:border-box;"></div>
<div class="t" id="t88" style="left:2058.0px;top:1425.9px;font-size:18.95px;color:#14303d;letter-spacing:0.000px;transform:scaleX(1.016);transform-origin:0 50%;">Eastbrook Bus Compa...</div>
<div style="position:absolute;left:1537.4px;top:1154px;width:18px;height:240px;background:rgba(20,50,65,0.055);border-radius:0px;"></div>
<div style="position:absolute;left:1650.5px;top:1154px;width:18px;height:240px;background:rgba(20,50,65,0.055);border-radius:0px;"></div>
<div style="position:absolute;left:1801px;top:1154px;width:18px;height:240px;background:rgba(20,50,65,0.055);border-radius:0px;"></div>
<div style="position:absolute;left:1913.7px;top:1154px;width:18px;height:240px;background:rgba(20,50,65,0.055);border-radius:0px;"></div>
<div style="position:absolute;left:1434px;top:1153.25px;width:564px;height:1.5px;background:#89a7b4;border-radius:0px;"></div>
<div style="position:absolute;left:1434px;top:1201.31px;width:564px;height:1.5px;background:#89a7b4;border-radius:0px;"></div>
<div style="position:absolute;left:1434px;top:1249.37px;width:564px;height:1.5px;background:#89a7b4;border-radius:0px;"></div>
<div style="position:absolute;left:1434px;top:1297.4299999999998px;width:564px;height:1.5px;background:#89a7b4;border-radius:0px;"></div>
<div style="position:absolute;left:1434px;top:1345.49px;width:564px;height:1.5px;background:#89a7b4;border-radius:0px;"></div>
<div style="position:absolute;left:1434px;top:1393.55px;width:564px;height:1.5px;background:#89a7b4;border-radius:0px;"></div>
<div class="t" id="t89" style="left:1296.0px;top:1169.7px;font-size:18.84px;color:#14303d;letter-spacing:0.000px;font-weight:700;width:120px;text-align:right;">90</div>
<div class="t" id="t90" style="left:1296.0px;top:1193.7px;font-size:18.84px;color:#14303d;letter-spacing:0.000px;width:120px;text-align:right;">80</div>
<div class="t" id="t91" style="left:1296.0px;top:1241.8px;font-size:18.84px;color:#14303d;letter-spacing:0.000px;width:120px;text-align:right;">60</div>
<div class="t" id="t92" style="left:1296.0px;top:1289.9px;font-size:18.84px;color:#14303d;letter-spacing:0.000px;width:120px;text-align:right;">40</div>
<div class="t" id="t93" style="left:1296.0px;top:1337.9px;font-size:18.84px;color:#14303d;letter-spacing:0.000px;width:120px;text-align:right;">20</div>
<div class="t" id="t94" style="left:1296.0px;top:1386.0px;font-size:18.84px;color:#14303d;letter-spacing:0.000px;width:120px;text-align:right;">0</div>
<div class="t" id="t95" style="left:1301.5px;top:1272.7px;font-size:16.23px;color:#14303d;letter-spacing:0.758px;-webkit-text-stroke:0.4px currentColor;transform:rotate(-90deg) scaleX(0.860);transform-origin:50% 50%;">% REACHED</div>
<div class="t" id="t96" style="left:1374.3px;top:1422.5px;font-size:15.36px;color:#14303d;letter-spacing:0.000px;width:120px;text-align:center;">Mo</div>
<div class="t" id="t97" style="left:1374.3px;top:1448.8px;font-size:15.65px;color:#14303d;letter-spacing:0.000px;width:120px;text-align:center;">1</div>
<div class="t" id="t98" style="left:1411.9px;top:1422.5px;font-size:15.36px;color:#14303d;letter-spacing:0.000px;width:120px;text-align:center;">We</div>
<div class="t" id="t99" style="left:1411.9px;top:1448.8px;font-size:15.65px;color:#14303d;letter-spacing:0.000px;width:120px;text-align:center;">3</div>
<div class="t" id="t100" style="left:1449.5px;top:1422.5px;font-size:15.36px;color:#14303d;letter-spacing:0.000px;width:120px;text-align:center;">Fr</div>
<div class="t" id="t101" style="left:1449.5px;top:1448.8px;font-size:15.65px;color:#14303d;letter-spacing:0.000px;width:120px;text-align:center;">5</div>
<div class="t" id="t102" style="left:1487.1px;top:1422.5px;font-size:15.36px;color:#14303d;letter-spacing:0.000px;width:120px;text-align:center;">Su</div>
<div class="t" id="t103" style="left:1487.1px;top:1448.8px;font-size:15.65px;color:#14303d;letter-spacing:0.000px;width:120px;text-align:center;">7</div>
<div class="t" id="t104" style="left:1524.7px;top:1422.5px;font-size:15.36px;color:#14303d;letter-spacing:0.000px;width:120px;text-align:center;">Tu</div>
<div class="t" id="t105" style="left:1524.7px;top:1448.8px;font-size:15.65px;color:#14303d;letter-spacing:0.000px;width:120px;text-align:center;">9</div>
<div class="t" id="t106" style="left:1562.3px;top:1422.5px;font-size:15.36px;color:#14303d;letter-spacing:0.000px;width:120px;text-align:center;">Th</div>
<div class="t" id="t107" style="left:1562.3px;top:1448.8px;font-size:15.65px;color:#14303d;letter-spacing:0.000px;width:120px;text-align:center;">11</div>
<div class="t" id="t108" style="left:1599.9px;top:1422.5px;font-size:15.36px;color:#14303d;letter-spacing:0.000px;width:120px;text-align:center;">Sa</div>
<div class="t" id="t109" style="left:1599.9px;top:1448.8px;font-size:15.65px;color:#14303d;letter-spacing:0.000px;width:120px;text-align:center;">13</div>
<div class="t" id="t110" style="left:1637.5px;top:1422.5px;font-size:15.36px;color:#14303d;letter-spacing:0.000px;width:120px;text-align:center;">Mo</div>
<div class="t" id="t111" style="left:1637.5px;top:1448.8px;font-size:15.65px;color:#14303d;letter-spacing:0.000px;width:120px;text-align:center;">15</div>
<div class="t" id="t112" style="left:1675.1px;top:1422.5px;font-size:15.36px;color:#14303d;letter-spacing:0.000px;width:120px;text-align:center;">We</div>
<div class="t" id="t113" style="left:1675.1px;top:1448.8px;font-size:15.65px;color:#14303d;letter-spacing:0.000px;width:120px;text-align:center;">17</div>
<div class="t" id="t114" style="left:1712.7px;top:1422.5px;font-size:15.36px;color:#14303d;letter-spacing:0.000px;width:120px;text-align:center;">Fr</div>
<div class="t" id="t115" style="left:1712.7px;top:1448.8px;font-size:15.65px;color:#14303d;letter-spacing:0.000px;width:120px;text-align:center;">19</div>
<div class="t" id="t116" style="left:1750.3px;top:1422.5px;font-size:15.36px;color:#14303d;letter-spacing:0.000px;width:120px;text-align:center;">Su</div>
<div class="t" id="t117" style="left:1750.3px;top:1448.8px;font-size:15.65px;color:#14303d;letter-spacing:0.000px;width:120px;text-align:center;">21</div>
<div class="t" id="t118" style="left:1787.9px;top:1422.5px;font-size:15.36px;color:#14303d;letter-spacing:0.000px;width:120px;text-align:center;">Tu</div>
<div class="t" id="t119" style="left:1787.9px;top:1448.8px;font-size:15.65px;color:#14303d;letter-spacing:0.000px;width:120px;text-align:center;">23</div>
<div class="t" id="t120" style="left:1825.5px;top:1422.5px;font-size:15.36px;color:#14303d;letter-spacing:0.000px;width:120px;text-align:center;">Th</div>
<div class="t" id="t121" style="left:1825.5px;top:1448.8px;font-size:15.65px;color:#14303d;letter-spacing:0.000px;width:120px;text-align:center;">25</div>
<div class="t" id="t122" style="left:1863.1px;top:1422.5px;font-size:15.36px;color:#14303d;letter-spacing:0.000px;width:120px;text-align:center;">Sa</div>
<div class="t" id="t123" style="left:1863.1px;top:1448.8px;font-size:15.65px;color:#14303d;letter-spacing:0.000px;width:120px;text-align:center;">27</div>
<div class="t" id="t124" style="left:1900.7px;top:1422.5px;font-size:15.36px;color:#14303d;letter-spacing:0.000px;width:120px;text-align:center;">Mo</div>
<div class="t" id="t125" style="left:1900.7px;top:1448.8px;font-size:15.65px;color:#14303d;letter-spacing:0.000px;width:120px;text-align:center;">29</div>
<div class="t" id="t126" style="left:1938.3px;top:1422.5px;font-size:15.36px;color:#14303d;letter-spacing:0.000px;width:120px;text-align:center;">We</div>
<div class="t" id="t127" style="left:1938.3px;top:1448.8px;font-size:15.65px;color:#14303d;letter-spacing:0.000px;width:120px;text-align:center;">31</div>
<div class="t" id="t128" style="left:1695.2px;top:1488.6px;font-size:14.78px;color:#14303d;letter-spacing:0.792px;-webkit-text-stroke:0.4px currentColor;">DAYS</div>
<div style="position:absolute;left:1434px;top:1177.03px;width:564px;height:2px;background:repeating-linear-gradient(90deg,#1d8a80 0 4px,transparent 4px 8px);border-radius:0px;"></div>
<svg style="position:absolute;left:1424px;top:1140px;overflow:visible;" width="600" height="100" viewBox="0 0 600 100"><polyline points="10.0,26.3 29.4,36.1 48.9,33.0 68.3,33.9 87.8,36.1 107.2,31.5 126.7,44.7 146.1,31.5 165.6,24.4 185.0,31.5 204.5,39.2 223.9,43.8 243.4,39.2 262.8,33.0 282.3,20.7 301.7,37.6 321.2,33.0 340.6,43.8 360.1,20.7 379.5,39.2 399.0,43.8 418.4,33.0 437.9,22.3 457.3,20.7 476.8,19.2 496.2,37.6 515.7,20.7 535.1,26.9 554.6,20.7 574.0,24.4" fill="none" stroke="#6f97c9" stroke-width="2.2" stroke-linejoin="round" opacity="0.9"/><polyline points="10.0,54.5 29.4,36.1 48.9,37.6 68.3,37.0 87.8,32.4 107.2,47.8 126.7,37.6 146.1,45.3 165.6,41.6 185.0,37.6 204.5,43.8 223.9,39.2 243.4,33.0 262.8,36.1 282.3,43.8 301.7,34.6 321.2,37.6 340.6,36.1 360.1,39.2 379.5,43.8 399.0,38.6 418.4,39.2 437.9,40.7 457.3,43.8 476.8,23.8 496.2,43.8 515.7,34.6 535.1,29.9 554.6,40.7 574.0,33.0" fill="none" stroke="#5b86be" stroke-width="2.2" stroke-linejoin="round" opacity="0.9"/><polyline points="10.0,56.1 29.4,55.1 48.9,52.4 68.3,53.6 87.8,47.8 107.2,47.8 126.7,48.4 146.1,52.4 165.6,45.3 185.0,53.9 204.5,51.5 223.9,46.9 243.4,58.2 262.8,53.0 282.3,43.8 301.7,33.0 321.2,40.7 340.6,20.7 360.1,56.1 379.5,51.5 399.0,46.9 418.4,29.9 437.9,28.4 457.3,26.9 476.8,49.9 496.2,20.7 515.7,31.5 535.1,20.7 554.6,20.7 574.0,24.4" fill="none" stroke="#7aa3d3" stroke-width="2.2" stroke-linejoin="round" opacity="0.9"/><polyline points="10.0,43.8 29.4,45.9 48.9,43.8 68.3,44.7 87.8,47.8 107.2,40.7 126.7,47.8 146.1,36.1 165.6,37.6 185.0,43.8 204.5,40.7 223.9,40.1 243.4,47.8 262.8,44.7 282.3,39.2 301.7,43.8 321.2,45.3 340.6,43.8 360.1,34.6 379.5,37.6 399.0,40.7 418.4,40.7 437.9,39.2 457.3,40.7 476.8,51.5 496.2,40.7 515.7,43.8 535.1,48.4 554.6,42.2 574.0,48.4" fill="none" stroke="#4d78b4" stroke-width="2.2" stroke-linejoin="round" opacity="0.9"/><polyline points="10.0,25.3 29.4,36.1 48.9,32.4 68.3,33.6 87.8,39.2 107.2,26.3 126.7,46.9 146.1,36.1 165.6,23.2 185.0,37.6 204.5,40.7 223.9,43.8 243.4,45.3 262.8,37.6 282.3,28.4 301.7,44.7 321.2,38.6 340.6,38.6 360.1,39.2 379.5,37.6 399.0,45.3 418.4,38.6 437.9,39.2 457.3,42.2 476.8,50.8 496.2,29.9 515.7,36.1 535.1,42.2 554.6,43.8 574.0,39.2" fill="none" stroke="#8cb0da" stroke-width="2.0" stroke-linejoin="round" opacity="0.9"/><polyline points="10.0,37.6 29.4,19.2 48.9,23.2 68.3,21.7 87.8,27.5 107.2,27.5 126.7,22.9 146.1,22.9 165.6,30.9 185.0,21.7 204.5,23.8 223.9,28.7 243.4,16.1 262.8,22.0 282.3,33.3 301.7,30.9 321.2,33.3 340.6,33.3 360.1,17.0 379.5,23.2 399.0,29.0 418.4,37.6 437.9,33.0 457.3,28.4 476.8,22.9 496.2,33.9 515.7,40.1 535.1,33.0 554.6,33.0 574.0,29.9" fill="none" stroke="#1f4e91" stroke-width="2.6" stroke-linejoin="round" opacity="0.9"/></svg>
</div></div>
<div style="position:absolute;left:48px;top:165px;width:459px;height:3.2px;background:#ea9a3a;border-radius:0 2px 2px 0;"></div>
<div style="position:absolute;left:0px;top:118px;width:97px;height:97px;background:#ea9a3a;border-radius:50%;"></div>
<svg style="position:absolute;left:30px;top:145px;overflow:visible;" width="30" height="42" viewBox="0 0 30 42"><path d="M16.2,3.7 H24.2 V38.5 H15.2 V13 L8,15.6 V7.6 Z" fill="#ffffff"/></svg>
<div style="position:absolute;left:509px;top:123px;width:150px;height:83px;background:#ffffff;border-radius:10px;"></div>
<div style="position:absolute;left:522px;top:132px;width:132px;height:66px;background:#ffffff;border-radius:9px;border:1.6px solid #c8c8c8;box-sizing:border-box;"></div>
<div style="position:absolute;left:586.2px;top:132px;width:1.6px;height:66px;background:#c8c8c8;border-radius:0px;"></div>
<svg style="position:absolute;left:546px;top:154px;overflow:visible;" width="16" height="22" viewBox="0 0 16 22"><path d="M13.5,2 L4.5,11 L13.5,20" fill="none" stroke="#111" stroke-width="2.2" stroke-linecap="round" stroke-linejoin="round"/></svg>
<svg style="position:absolute;left:613px;top:154px;overflow:visible;" width="16" height="22" viewBox="0 0 16 22"><path d="M3,2 L12,11 L3,20" fill="none" stroke="#111" stroke-width="2.2" stroke-linecap="round" stroke-linejoin="round"/></svg>
</body></html>
